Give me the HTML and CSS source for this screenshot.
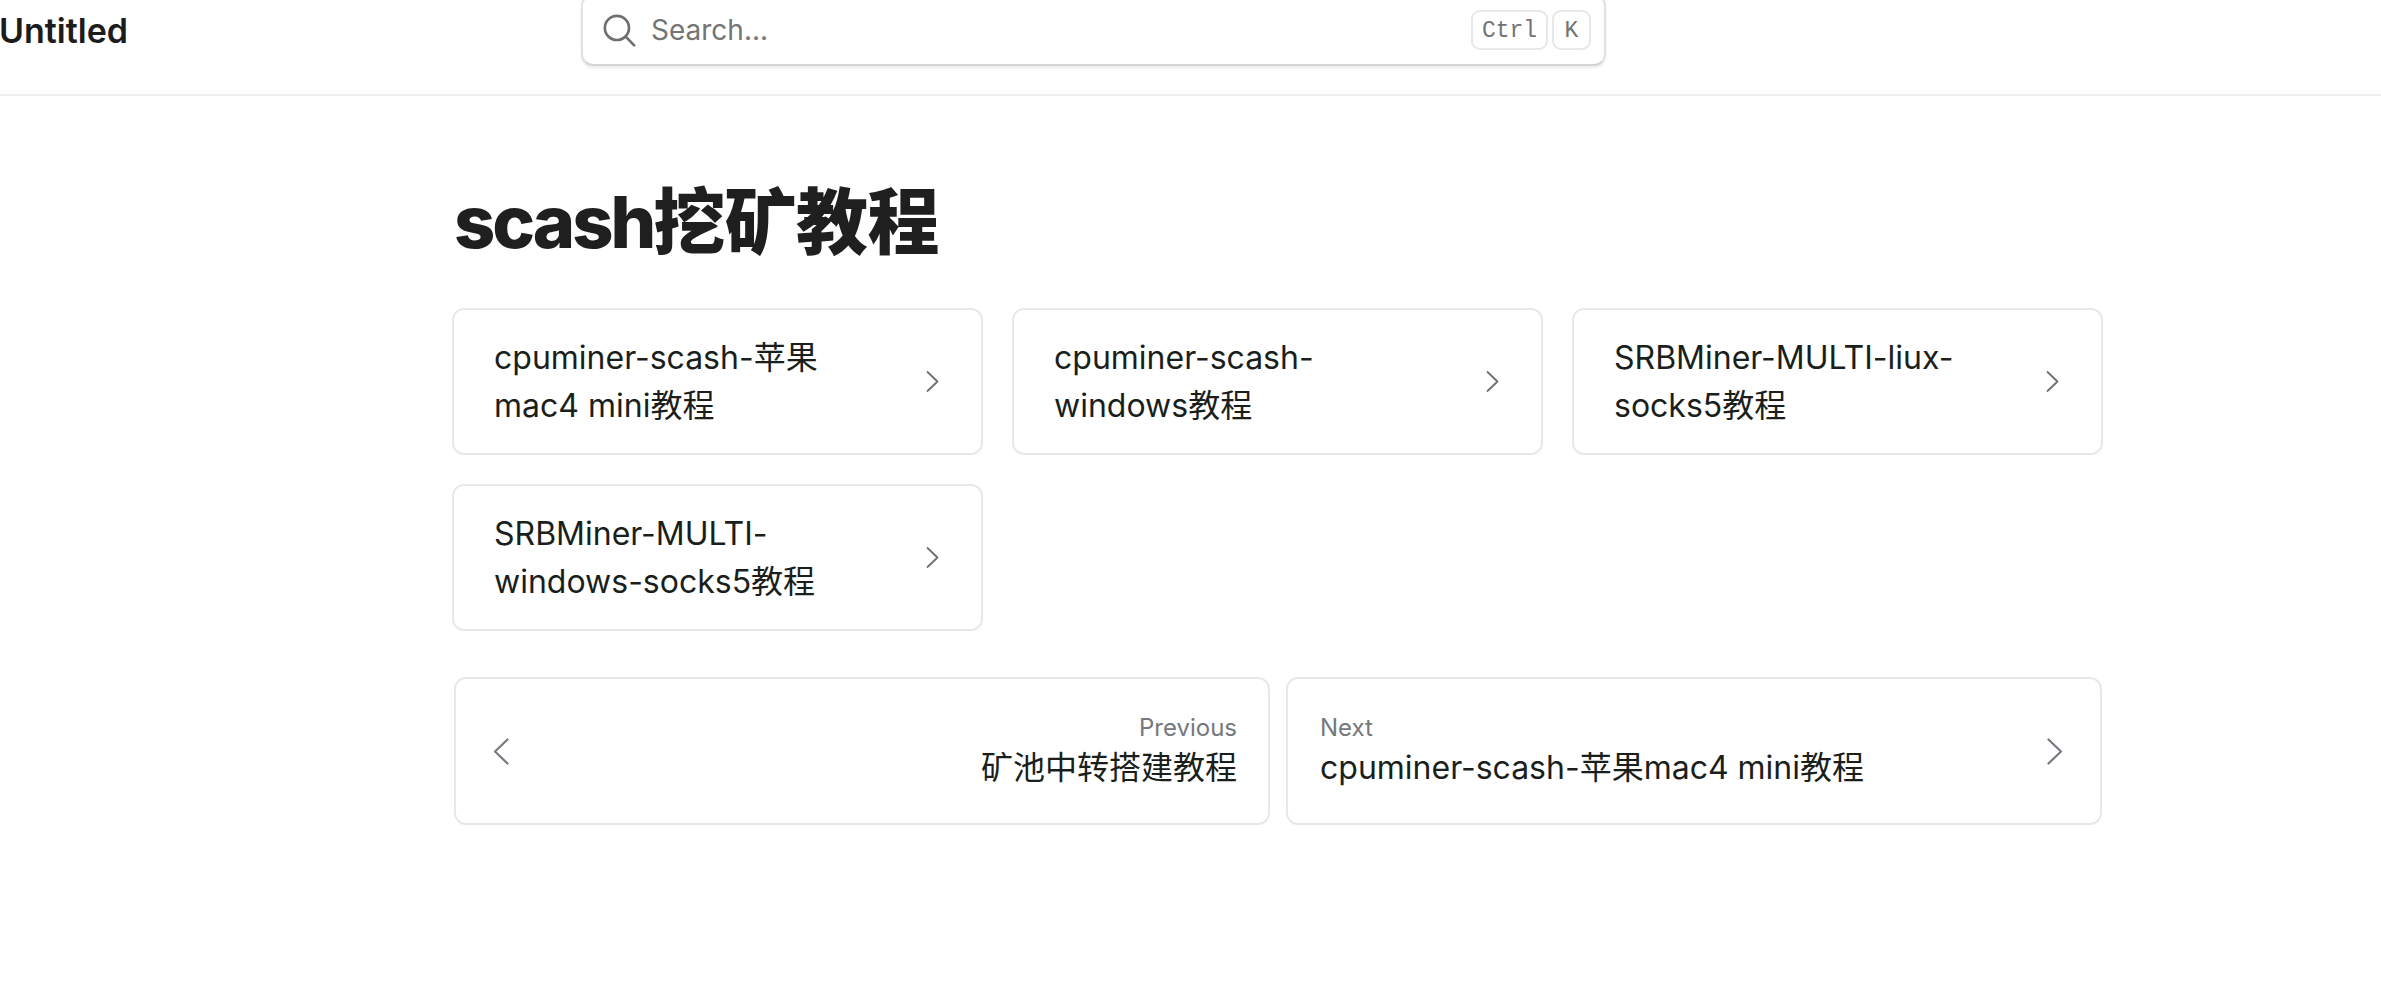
FILE: index.html
```html
<!DOCTYPE html>
<html lang="zh">
<head>
<meta charset="utf-8">
<title>scash挖矿教程</title>
<link rel="stylesheet" href="styles.css">
</head>
<body>
<header class="topbar">
  <div class="topbar-row">
    <a class="brand">Untitled</a>
    <div class="search">
      <svg class="search-icon" viewBox="0 0 32 32" fill="none" stroke="currentColor" stroke-width="2.6" stroke-linecap="round"><circle cx="13.5" cy="13.5" r="11.7"/><path d="M22 22l8.2 8.4"/></svg>
      <span class="search-text">Search...</span>
      <span class="keys"><kbd class="key key-ctrl">Ctrl</kbd><kbd class="key key-k">K</kbd></span>
    </div>
  </div>
</header>
<main class="content">
  <h1 class="title"><span class="title-latin">scash</span>挖矿教程</h1>
  <div class="cards">
    <a class="card"><span class="card-text">cpuminer-scash-苹果mac4 mini教程</span><svg class="chev" viewBox="0 0 13 21" fill="none" stroke="currentColor" stroke-width="1.8" stroke-linecap="round" stroke-linejoin="round"><path d="M1.5 1l10 9.5-10 9.5"/></svg></a>
    <a class="card"><span class="card-text">cpuminer-scash-windows教程</span><svg class="chev" viewBox="0 0 13 21" fill="none" stroke="currentColor" stroke-width="1.8" stroke-linecap="round" stroke-linejoin="round"><path d="M1.5 1l10 9.5-10 9.5"/></svg></a>
    <a class="card"><span class="card-text">SRBMiner-MULTI-liux-socks5教程</span><svg class="chev" viewBox="0 0 13 21" fill="none" stroke="currentColor" stroke-width="1.8" stroke-linecap="round" stroke-linejoin="round"><path d="M1.5 1l10 9.5-10 9.5"/></svg></a>
    <a class="card"><span class="card-text">SRBMiner-MULTI-windows-socks5教程</span><svg class="chev" viewBox="0 0 13 21" fill="none" stroke="currentColor" stroke-width="1.8" stroke-linecap="round" stroke-linejoin="round"><path d="M1.5 1l10 9.5-10 9.5"/></svg></a>
  </div>
  <nav class="pager">
    <a class="page-link page-prev">
      <svg class="page-chev" viewBox="0 0 16 27" fill="none" stroke="currentColor" stroke-width="2.2" stroke-linecap="round" stroke-linejoin="round"><path d="M14.5 1.5L2 13.5l12.5 12"/></svg>
      <span class="page-text"><span class="page-label">Previous</span><span class="page-name">矿池中转搭建教程</span></span>
    </a>
    <a class="page-link page-next">
      <span class="page-text"><span class="page-label">Next</span><span class="page-name">cpuminer-scash-苹果mac4 mini教程</span></span>
      <svg class="page-chev" viewBox="0 0 16 27" fill="none" stroke="currentColor" stroke-width="2.2" stroke-linecap="round" stroke-linejoin="round"><path d="M1.5 1.5L14 13.5l-12.5 12"/></svg>
    </a>
  </nav>
</main>
</body>
</html>
```
FILE: styles.css
```css
* { box-sizing: border-box; }
html, body { margin: 0; padding: 0; height: 100%; overflow: hidden; background: #fff; }
body { font-family: Inter, "Noto Sans CJK SC", sans-serif; color: #1c1c1c; }
a { color: inherit; text-decoration: none; }

.topbar { height: 96px; border-bottom: 2px solid #eeeeee; }
.topbar-row { height: 60px; display: flex; align-items: center; }
.brand { width: 582px; margin-left: -1px; font-size: 34px; font-weight: 600; letter-spacing: 0; flex: none; }
.search { flex: none; width: 1025px; height: 72px; display: flex; align-items: center; padding: 0 13px 0 20px; background: #fff; border: 2px solid #e2e2e2; border-bottom-color: #d4d4d4; border-radius: 12px; box-shadow: 0 2px 3px rgba(0,0,0,.08); color: #737373; }
.search-icon { width: 33px; height: 33px; flex: none; color: #6f6f6f; }
.search-text { margin-left: 15px; font-size: 28px; flex: 1; color: #757575; }
.keys { display: flex; gap: 4px; }
.key { height: 40px; padding-top: 2px; display: flex; align-items: center; justify-content: center; border: 2px solid #e8e8e8; border-radius: 9px; font-family: "Liberation Mono", monospace; font-size: 23px; color: #737373; background: #fff; }
.key-ctrl { width: 77px; }
.key-k { width: 39px; }

.content { margin-left: 452px; width: 1651px; }
.title { margin: 0 0 0 2px; padding-top: 63px; height: 212px; line-height: 126px; font-size: 72px; font-weight: 800; letter-spacing: -0.6px; color: #1f1f1f; }
.title-latin { letter-spacing: -3px; }
.cards { display: grid; grid-template-columns: repeat(3, 531px); gap: 29px; }
.card { height: 147px; display: flex; align-items: center; padding: 0 42px 0 40px; border: 2px solid #e8e8e8; border-radius: 12px; font-size: 32px; line-height: 48px; color: #1a1f1c; }
.card-text { flex: 1; padding-right: 80px; }
.chev { width: 13px; height: 21px; flex: none; color: #6b7076; }

.pager { margin: 46px 0 0 2px; display: grid; grid-template-columns: 816px 816px; gap: 16px; }
.page-link { height: 148px; display: flex; align-items: center; justify-content: space-between; padding: 0 31px 0 37px; border: 2px solid #e8e8e8; border-radius: 12px; }
.page-next { padding: 0 37px 0 32px; }
.page-chev { width: 16px; height: 27px; flex: none; color: #757a80; }
.page-text { display: flex; flex-direction: column; margin-bottom: 3px; }
.page-prev .page-text { align-items: flex-end; }
.page-label { font-size: 24px; line-height: 36px; color: #75787c; }
.page-name { font-size: 32px; line-height: 44px; color: #1a1f1c; }
```
